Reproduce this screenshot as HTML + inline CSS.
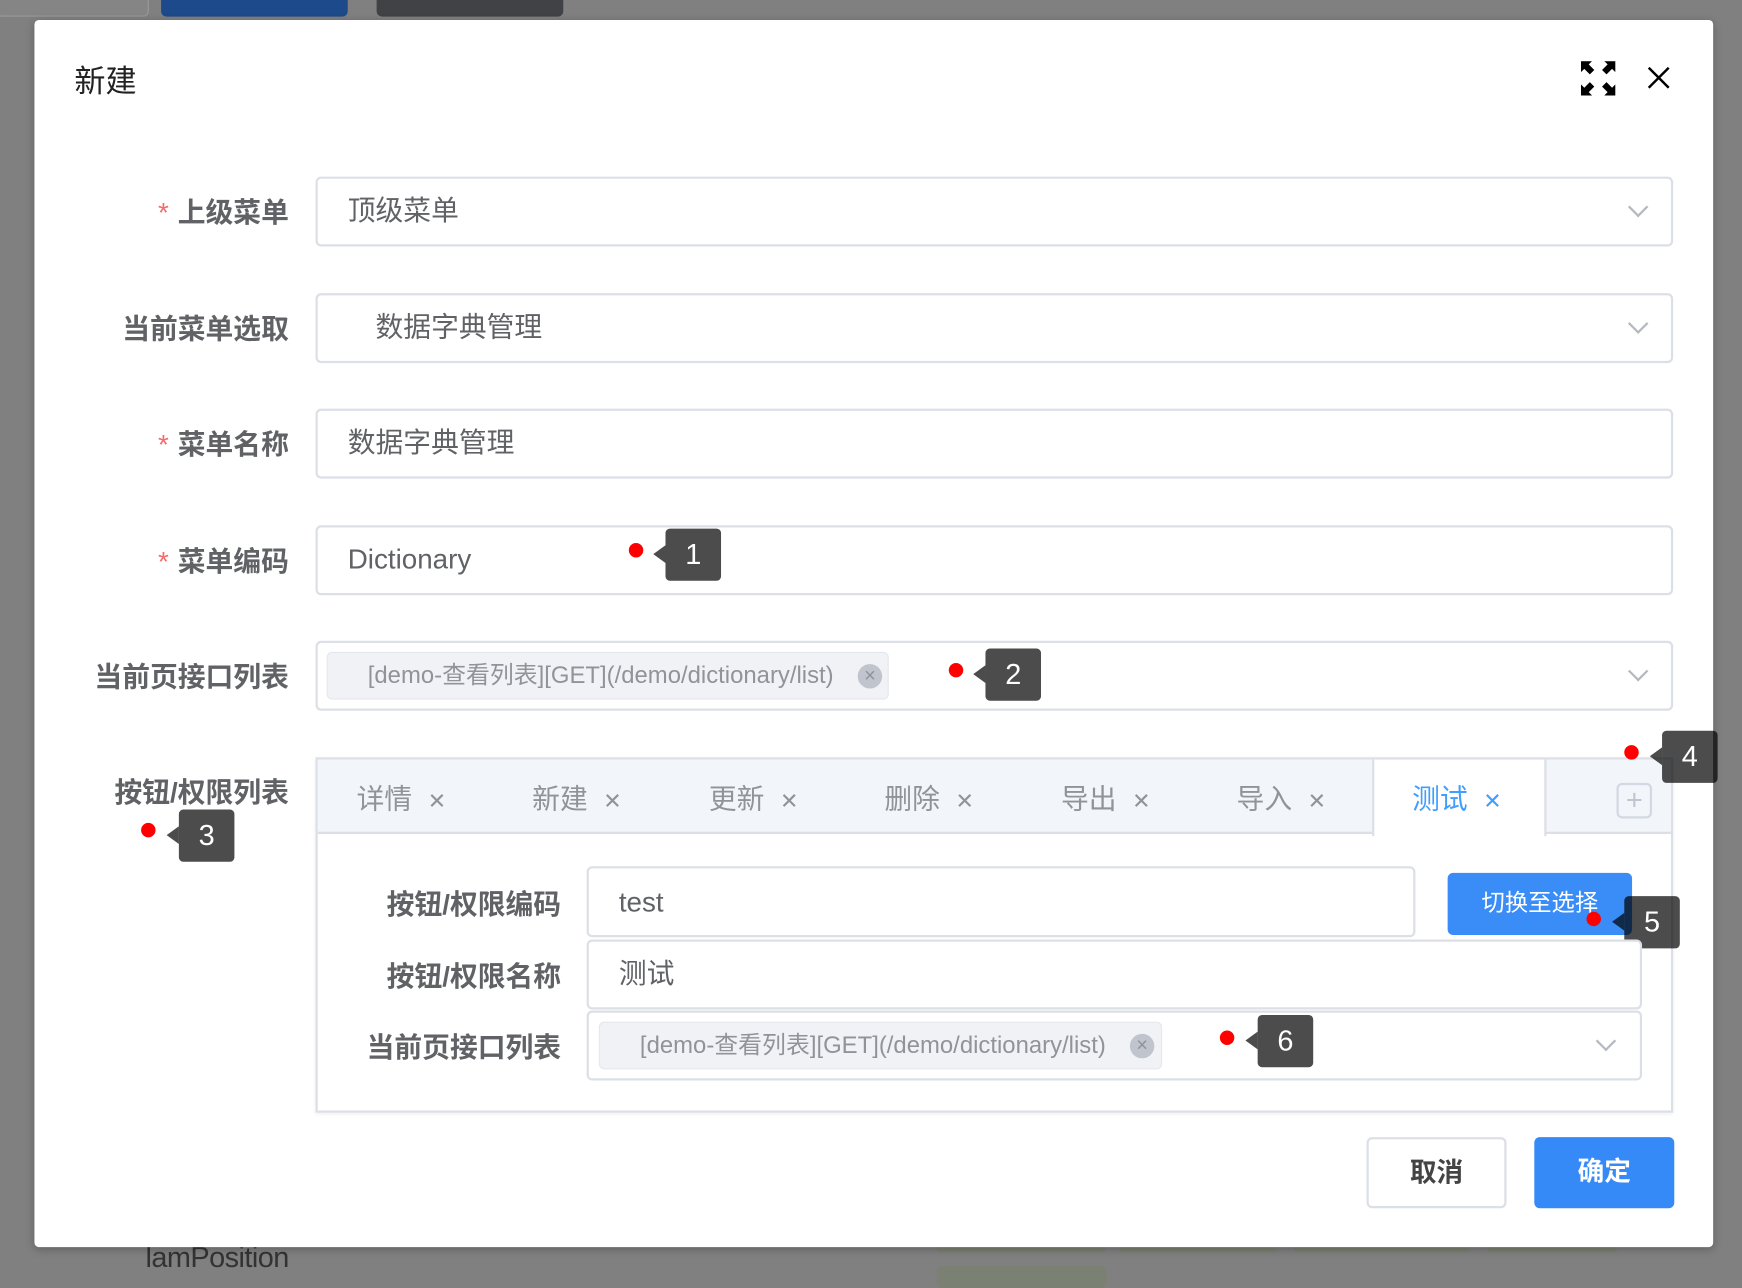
<!DOCTYPE html>
<html><head><meta charset="utf-8"><style>
*{box-sizing:border-box;margin:0;padding:0}
html,body{width:1742px;height:1276px;overflow:hidden;background:#808080}
body{font-family:"Liberation Sans","Noto Sans CJK SC",sans-serif}
#s{position:absolute;left:0;top:0;width:1568px;height:1149px;transform:scale(1.111,1.1105);transform-origin:0 0}
.a{position:absolute}
.modal{left:31px;top:18px;width:1511px;height:1105px;background:#fff;border-radius:4px;box-shadow:0 2px 8px rgba(0,0,0,.25)}
.lbl{position:absolute;right:1308px;font-size:25px;font-weight:bold;color:#606266;white-space:nowrap;line-height:30px}
.lbl i{color:#f56c6c;font-style:normal;margin-right:8px;font-weight:normal}
.inp{position:absolute;border:2px solid #dcdfe6;border-radius:5px;background:#fff;font-size:25px;color:#606266;line-height:59px;padding-left:27px;white-space:nowrap}
.chev{position:absolute;width:13px;height:13px;border-right:2px solid #b4b8c0;border-bottom:2px solid #b4b8c0;transform:rotate(45deg)}
.tag{position:absolute;background:#f0f2f5;border:1px solid #e4e7ed;border-radius:5px;font-size:21.5px;color:#909399;line-height:41px;padding-left:36px;white-space:nowrap}
.tag b{position:absolute;width:22px;height:22px;border-radius:50%;background:#c0c4cc;top:10px;color:#909399;font-weight:normal;font-size:18px;line-height:21px;text-align:center}
.dot{position:absolute;width:13px;height:13px;border-radius:50%;background:#f00}
.co{position:absolute;width:50px;height:47px;background:rgba(0,0,0,.7);border-radius:4px;color:#fff;font-size:26px;text-align:center;line-height:47px}
.co:before{content:"";position:absolute;left:-11px;top:15px;border:8px solid transparent;border-right:11px solid rgba(0,0,0,.7);border-left:0}
.tab{position:absolute;top:700px;font-size:25px;color:#909399;white-space:nowrap}
.tab span{font-size:20px;margin-left:14px;font-weight:300}
.ilbl{position:absolute;right:1063px;font-size:25px;font-weight:bold;color:#606266;white-space:nowrap}
.btn{position:absolute;border-radius:5px;font-size:24px;text-align:center}
</style></head><body><div id="s">
<div class="a" style="left:-4px;top:-6px;width:138px;height:21px;background:#858585;border:1px solid #999;border-radius:5px"></div>
<div class="a" style="left:145px;top:-6px;width:168px;height:21px;background:#1d4a8a;border-radius:5px"></div>
<div class="a" style="left:339px;top:-6px;width:168px;height:21px;background:#414246;border-radius:5px"></div>
<div class="a" style="left:131px;top:1117px;font-size:26px;color:#333;letter-spacing:-0.5px">lamPosition</div>
<div class="a" style="left:843px;top:1110px;width:153px;height:18px;background:#7a8072;border-radius:5px"></div>
<div class="a" style="left:1007px;top:1110px;width:143px;height:18px;background:#7a8072;border-radius:5px"></div>
<div class="a" style="left:1164px;top:1110px;width:159px;height:18px;background:#7a8072;border-radius:5px"></div>
<div class="a" style="left:1338px;top:1110px;width:118px;height:18px;background:#7a8072;border-radius:5px"></div>
<div class="a" style="left:843px;top:1140px;width:153px;height:20px;background:#7a8072;border-radius:5px"></div>

<div class="a modal"></div>
<div class="a" style="left:67px;top:52px;font-size:28px;color:#222">新建</div>
<svg class="a" style="left:1423px;top:55px" width="31" height="31" viewBox="0 0 31 31" fill="#000">
<path d="M0 0h10l-3 3 5 5-4 4-5-5-3 3z"/><path d="M31 0v10l-3-3-5 5-4-4 5-5-3-3z"/><path d="M0 31v-10l3 3 5-5 4 4-5 5 3 3z"/><path d="M31 31h-10l3-3-5-5 4-4 5 5 3-3z"/></svg>
<svg class="a" style="left:1483px;top:60px" width="20" height="20" viewBox="0 0 20 20" stroke="#000" stroke-width="2.2"><path d="M1 1L19 19M19 1L1 19"/></svg>

<div class="lbl" style="top:177px"><i>*</i>上级菜单</div>
<div class="inp" style="left:284px;top:159px;width:1222px;height:63px">顶级菜单</div>
<div class="chev" style="left:1468px;top:180px"></div>

<div class="lbl" style="top:282px">当前菜单选取</div>
<div class="inp" style="left:284px;top:264px;width:1222px;height:63px;padding-left:52px">数据字典管理</div>
<div class="chev" style="left:1468px;top:285px"></div>

<div class="lbl" style="top:386px"><i>*</i>菜单名称</div>
<div class="inp" style="left:284px;top:368px;width:1222px;height:63px">数据字典管理</div>

<div class="lbl" style="top:491px"><i>*</i>菜单编码</div>
<div class="inp" style="left:284px;top:473px;width:1222px;height:63px">Dictionary</div>
<div class="dot" style="left:566px;top:489px"></div><div class="co" style="left:599px;top:476px">1</div>

<div class="lbl" style="top:595px">当前页接口列表</div>
<div class="inp" style="left:284px;top:577px;width:1222px;height:63px"></div>
<div class="tag" style="left:294px;top:587px;width:506px;height:43px">[demo-查看列表][GET](/demo/dictionary/list)<b style="left:477px">×</b></div>
<div class="chev" style="left:1468px;top:598px"></div>
<div class="dot" style="left:854px;top:597px"></div><div class="co" style="left:887px;top:584px">2</div>

<div class="lbl" style="top:699px">按钮/权限列表</div>
<div class="dot" style="left:127px;top:741px"></div><div class="co" style="left:161px;top:729px">3</div>

<div class="a" style="left:284px;top:682px;width:1222px;height:320px;border:2px solid #dcdfe6;background:#fff;box-shadow:0 1px 4px rgba(0,0,0,.08)"></div>
<div class="a" style="left:286px;top:684px;width:1218px;height:67px;background:#f2f5f9;border-bottom:2px solid #dcdfe6"></div>
<div class="a" style="left:1235px;top:684px;width:157px;height:69px;background:#fff;border-left:2px solid #dcdfe6;border-right:2px solid #dcdfe6"></div>
<div class="tab" style="left:321px">详情<span>✕</span></div>
<div class="tab" style="left:479px">新建<span>✕</span></div>
<div class="tab" style="left:638px">更新<span>✕</span></div>
<div class="tab" style="left:796px">删除<span>✕</span></div>
<div class="tab" style="left:955px">导出<span>✕</span></div>
<div class="tab" style="left:1113px">导入<span>✕</span></div>
<div class="tab" style="left:1271px;color:#409eff">测试<span>✕</span></div>
<div class="a" style="left:1455px;top:705px;width:32px;height:32px;border:2px solid #d3d9e3;border-radius:5px;color:#c0c6d0;font-size:26px;line-height:27px;text-align:center">+</div>
<div class="dot" style="left:1462px;top:671px"></div><div class="co" style="left:1496px;top:658px">4</div>

<div class="ilbl" style="top:795px">按钮/权限编码</div>
<div class="inp" style="left:528px;top:780px;width:746px;height:64px;line-height:62px">test</div>
<div class="btn" style="left:1303px;top:786px;width:166px;height:56px;background:#3a8cf7;color:#fff;font-size:21px;line-height:56px">切换至选择</div>
<div class="dot" style="left:1428px;top:821px"></div><div class="co" style="left:1462px;top:807px">5</div>

<div class="ilbl" style="top:860px">按钮/权限名称</div>
<div class="inp" style="left:528px;top:846px;width:950px;height:63px">测试</div>
<div class="ilbl" style="top:924px">当前页接口列表</div>
<div class="inp" style="left:528px;top:910px;width:950px;height:63px"></div>
<div class="tag" style="left:539px;top:920px;width:507px;height:43px">[demo-查看列表][GET](/demo/dictionary/list)<b style="left:477px">×</b></div>
<div class="chev" style="left:1439px;top:931px"></div>
<div class="dot" style="left:1098px;top:928px"></div><div class="co" style="left:1132px;top:914px">6</div>

<div class="btn" style="left:1230px;top:1024px;width:126px;height:64px;border:2px solid #dcdfe6;background:#fff;color:#444;line-height:62px;font-weight:bold">取消</div>
<div class="btn" style="left:1381px;top:1024px;width:126px;height:64px;background:#368af7;color:#fff;line-height:64px;font-weight:bold">确定</div>
</div></body></html>
